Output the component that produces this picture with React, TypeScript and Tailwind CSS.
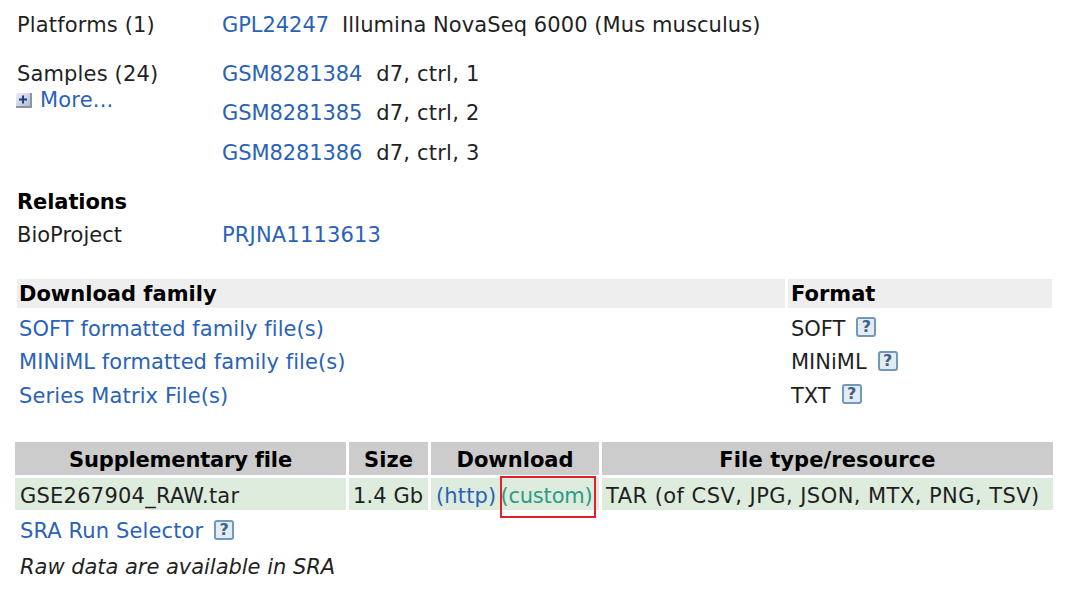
const link = "text-[#2a62b8]";

function HelpIcon() {
  return (
    <span className="inline-flex w-[20px] h-[20px] -mt-[3px] items-center justify-center rounded-[3px] border-[2.5px] border-[#7198bd] bg-[#e3ebf3] text-[#3f6285] text-[16px] leading-none font-bold">
      ?
    </span>
  );
}

function PlusIcon() {
  return (
    <svg width="16" height="15" viewBox="0 0 16 15" className="-ml-[1px]">
      <defs>
        <linearGradient id="plusFill" x1="0" y1="0" x2="1" y2="1">
          <stop offset="0" stopColor="#eef0f6" />
          <stop offset="1" stopColor="#b4bccf" />
        </linearGradient>
      </defs>
      <rect width="16" height="15" fill="#8c93a6" />
      <rect width="14" height="13" fill="url(#plusFill)" />
      <path d="M7 2.5v8M3 6.5h8" stroke="#1f3f86" strokeWidth="2" />
    </svg>
  );
}

function SampleRow({ id, label, h }: { id: string; label: string; h: string }) {
  return (
    <div className={`flex gap-[14px] items-center ${h}`}>
      <span className={`${link} tracking-[-0.1px]`}>{id}</span>
      <span className="tracking-[0.2px]">{label}</span>
    </div>
  );
}

function FamilyRow({ name, format, h, track }: { name: string; format: string; h: string; track: string }) {
  return (
    <div className={`flex items-center ${h}`}>
      <div className={`w-[771px] pl-[2px] ${link} ${track}`}>{name}</div>
      <div className="flex items-center gap-[11px] pl-[3px]">
        <span>{format}</span>
        <HelpIcon />
      </div>
    </div>
  );
}

export default function App() {
  return (
    <div className="w-[1080px] h-[589px] overflow-hidden bg-white text-[#1f1f1f] font-['DejaVu_Sans',sans-serif] text-[21px] leading-[26px]">
      <div className="pl-[17px] pt-[12px]">
        <div className="flex">
          <div className="w-[205px] tracking-[0.15px]">Platforms (1)</div>
          <div className="flex gap-[13px]">
            <span className={`${link} tracking-[-0.05px]`}>GPL24247</span>
            <span className="tracking-[0.08px]">Illumina NovaSeq 6000 (Mus musculus)</span>
          </div>
        </div>

        <div className="flex mt-[23px]">
          <div className="w-[205px]">
            <div className="tracking-[0.15px]">Samples (24)</div>
            <div className="flex items-center gap-[8px]">
              <PlusIcon />
              <span className={`${link} tracking-[0.2px]`}>More...</span>
            </div>
          </div>
          <div>
            <SampleRow id="GSM8281384" label="d7, ctrl, 1" h="h-[26px]" />
            <SampleRow id="GSM8281385" label="d7, ctrl, 2" h="h-[26px] mt-[13px]" />
            <SampleRow id="GSM8281386" label="d7, ctrl, 3" h="h-[26px] mt-[14px]" />
          </div>
        </div>

        <div className="font-bold mt-[23px] text-black tracking-[-0.1px]">Relations</div>
        <div className="flex mt-[7px]">
          <div className="w-[205px]">BioProject</div>
          <span className={`${link} tracking-[0.17px]`}>PRJNA1113613</span>
        </div>
      </div>

      <div className="ml-[17px] mt-[31px] w-[1035px]">
        <div className="flex gap-[3px] font-bold text-black">
          <div className="w-[768px] h-[29px] bg-[#eeeeee] pl-[2px] flex items-center">Download family</div>
          <div className="flex-1 h-[29px] bg-[#eeeeee] pl-[3px] flex items-center">Format</div>
        </div>
        <div className="mt-[4px]">
          <FamilyRow name="SOFT formatted family file(s)" format="SOFT" h="h-[33px]" track="tracking-[0.07px]" />
          <FamilyRow name="MINiML formatted family file(s)" format="MINiML" h="h-[34px]" track="tracking-[0.07px]" />
          <FamilyRow name="Series Matrix File(s)" format="TXT" h="h-[33px]" track="tracking-[0.14px]" />
        </div>
      </div>

      <div className="relative ml-[15px] mt-[30px] w-[1038px]">
        <div className="grid grid-cols-[331px_79px_168px_451px] gap-x-[3px] gap-y-[3px]">
          <div className="h-[33px] pt-[2px] bg-[#cccccc] font-bold text-black flex items-center justify-center tracking-[-0.17px]">Supplementary file</div>
          <div className="h-[33px] pt-[2px] bg-[#cccccc] font-bold text-black flex items-center justify-center">Size</div>
          <div className="h-[33px] pt-[2px] bg-[#cccccc] font-bold text-black flex items-center justify-center">Download</div>
          <div className="h-[33px] pt-[2px] bg-[#cccccc] font-bold text-black flex items-center justify-center tracking-[0.1px]">File type/resource</div>
          <div className="h-[32px] pt-[4px] bg-[#deecde] pl-[5px] flex items-center tracking-[0.24px]">GSE267904_RAW.tar</div>
          <div className="h-[32px] pt-[4px] bg-[#deecde] pl-[4px] flex items-center tracking-[0.1px]">1.4 Gb</div>
          <div className="h-[32px] pt-[4px] bg-[#deecde] pl-[5px] flex items-center">
            <span className={`${link} tracking-[0.15px]`}>(http)</span>
            <span className="ml-[4px] text-[#2f9a86] tracking-[-0.2px]">(custom)</span>
          </div>
          <div className="h-[32px] pt-[4px] bg-[#deecde] pl-[4px] flex items-center tracking-[0.45px]">TAR (of CSV, JPG, JSON, MTX, PNG, TSV)</div>
        </div>
        <div className="absolute left-[485px] top-[34px] w-[96px] h-[42px] border-2 border-[#e0202a]" />
        <div className="flex items-center gap-[11px] pl-[5px] mt-[8px]">
          <span className={`${link} tracking-[0.12px]`}>SRA Run Selector</span>
          <HelpIcon />
        </div>
        <div className="italic pl-[5px] mt-[10px] tracking-[-0.03px]">Raw data are available in SRA</div>
      </div>
    </div>
  );
}
